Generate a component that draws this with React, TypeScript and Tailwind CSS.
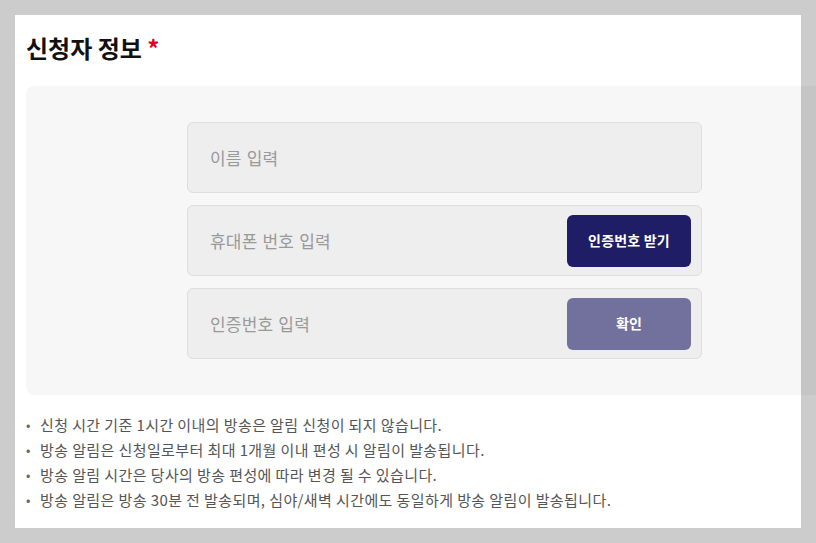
const notices = [
  "신청 시간 기준 1시간 이내의 방송은 알림 신청이 되지 않습니다.",
  "방송 알림은 신청일로부터 최대 1개월 이내 편성 시 알림이 발송됩니다.",
  "방송 알림 시간은 당사의 방송 편성에 따라 변경 될 수 있습니다.",
  "방송 알림은 방송 30분 전 발송되며, 심야/새벽 시간에도 동일하게 방송 알림이 발송됩니다.",
];

interface FieldProps {
  placeholder: string;
  button?: string;
  buttonClass?: string;
}

function Field({ placeholder, button, buttonClass }: FieldProps) {
  return (
    <div className="flex items-center justify-between w-[515px] h-[71px] rounded-md border border-[#dedede] bg-[#eeeeee] pl-[22px] pr-[10px]">
      <span className="text-[17px] tracking-[0.2px] [word-spacing:1px] text-[#999999]">
        {placeholder}
      </span>
      {button && (
        <button
          className={
            "w-[124px] h-[52px] rounded-md text-white text-[14px] tracking-[0.2px] font-bold " +
            buttonClass
          }
        >
          {button}
        </button>
      )}
    </div>
  );
}

export default function App() {
  return (
    <div
      className="w-screen h-screen overflow-hidden bg-[#cccccc] pt-[15px] pl-[15px]"
      style={{ fontFamily: '"Noto Sans CJK KR", "Noto Sans", sans-serif' }}
    >
      <div className="w-[786px] h-[513px] bg-white pl-[11px]">
        <h2 className="pt-[17px] h-[71px] text-[24px] font-bold text-[#111111] leading-[32px]">
          신청자 정보 <span className="text-[#e60023]">*</span>
        </h2>
        <div className="w-[790px] h-[309px] rounded-tl-lg rounded-bl-lg bg-black/[0.03] pt-[36px] pl-[161px] flex flex-col gap-[12px]">
          <Field placeholder="이름 입력" />
          <Field
            placeholder="휴대폰 번호 입력"
            button="인증번호 받기"
            buttonClass="bg-[#1f1d65]"
          />
          <Field
            placeholder="인증번호 입력"
            button="확인"
            buttonClass="bg-[#72719e]"
          />
        </div>
        <ul className="pt-[17px] text-[15px] tracking-[0.4px] text-[#555555] leading-[25px]">
          {notices.map((n) => (
            <li key={n} className="flex">
              <span className="w-[14px] text-[13px] text-[#666666]">•</span>
              <span>{n}</span>
            </li>
          ))}
        </ul>
      </div>
    </div>
  );
}
